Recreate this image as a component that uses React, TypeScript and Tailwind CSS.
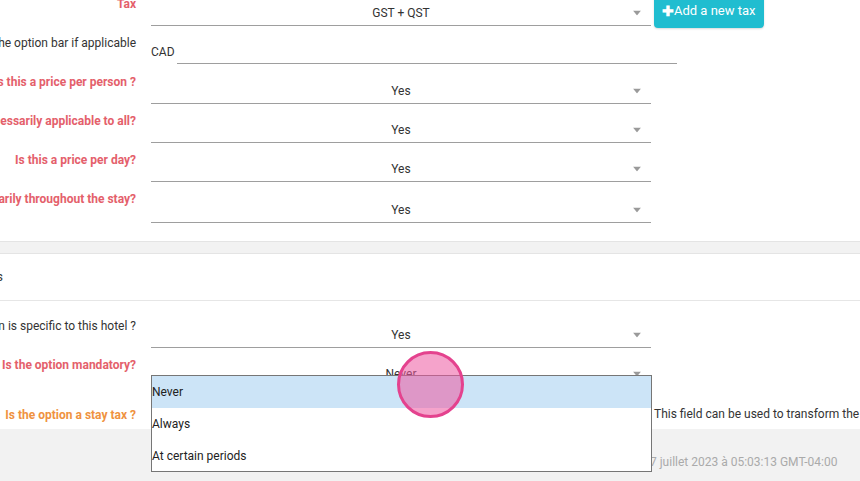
import type { ReactNode } from 'react'

const RED = 'text-[#e4606b]'
const ORANGE = 'text-[#ef9240]'

function Caret() {
  return (
    <svg width="8" height="5" viewBox="0 0 8 5" className="absolute right-[10px] top-1/2 -translate-y-1/2">
      <path d="M0 0 L8 0 L4 5 Z" fill="#9a9a9a" />
    </svg>
  )
}

function Select({ value, dark }: { value: string; dark?: boolean }) {
  return (
    <div className={`relative w-[500px] h-[26px] flex items-center justify-center border-b ${dark ? 'border-[#6b6b6b]' : 'border-[#9e9e9e]'} text-[12px] text-[#333]`}>
      {value}
      <Caret />
    </div>
  )
}

function Row({ label, tone, children, h = 'h-[39px]', mt = 'mt-[13px]', pt = 'pt-[9px]', extra }: { label: string; tone?: string; children: ReactNode; h?: string; mt?: string; pt?: string; extra?: ReactNode }) {
  return (
    <div className={`flex ${h}`}>
      <div className={`w-[136px] shrink-0 flex justify-end ${pt}`}>
        <span className={`whitespace-nowrap text-[12px] leading-4 ${tone ? `font-bold ${tone}` : 'text-[#333]'}`}>{label}</span>
      </div>
      <div className={`ml-[15px] ${mt}`}>{children}</div>
      {extra}
    </div>
  )
}

export default function App() {
  return (
    <div className="relative w-[860px] h-[481px] overflow-hidden bg-white" style={{ fontFamily: 'Roboto, "Noto Sans", sans-serif' }}>
      <div className="-mt-[13px]">
        <Row
          label="Tax"
          tone={RED}
          extra={
            <button className="ml-[3px] mt-[7px] h-[34px] px-[8px] rounded-b-[4px] bg-[#20bdd0] text-white text-[13px] flex items-center shadow-[0_1px_2px_rgba(0,0,0,0.15)]">
              <span className="font-bold text-[14px] leading-none">✚</span>Add a new tax
            </button>
          }
        >
          <Select value="GST + QST" />
        </Row>
        <Row label="Currency of the option bar if applicable">
          <div className="flex items-start text-[12px] text-[#333]">
            <span className="pt-[4px]">CAD</span>
            <div className="ml-[2px] w-[500px] h-[25px] border-b border-[#9e9e9e]" />
          </div>
        </Row>
        <Row label="Is this a price per person ?" tone={RED}>
          <Select value="Yes" />
        </Row>
        <Row label="Is this price necessarily applicable to all?" tone={RED}>
          <Select value="Yes" />
        </Row>
        <Row label="Is this a price per day?" tone={RED}>
          <Select value="Yes" />
        </Row>
        <Row label="Is this price necessarily throughout the stay?" tone={RED} h="h-[41px]" mt="mt-[15px]">
          <Select value="Yes" />
        </Row>
      </div>

      <div className="mt-[18px] h-[13px] bg-[#f2f2f2] border-y border-[#e4e4e4]" />

      <div className="h-[47px] flex items-center border-b border-[#e6e6e6] -ml-[66px] text-[13px] text-[#333]">
        Restrictions
      </div>

      <div className="pt-[8px]">
        <Row label="The option is specific to this hotel ?">
          <Select value="Yes" />
        </Row>
        <Row label="Is the option mandatory?" tone={RED}>
          <Select value="Never" dark />
        </Row>
        <Row
          label="Is the option a stay tax ?"
          tone={ORANGE}
          h="h-[42px]"
          pt="pt-[20px]"
          extra={<span className="ml-[3px] pt-[18px] whitespace-nowrap text-[12px] text-[#333]">This field can be used to transform the option into a stay tax</span>}
        >
          <div className="w-[500px]" />
        </Row>
      </div>

      <div className="h-[60px] bg-[#f2f2f2] pl-[650px] pt-[24px] text-[12px] text-[#aaaaaa] whitespace-nowrap">
        7 juillet 2023 à 05:03:13 GMT-04:00
      </div>

      {/* open dropdown list */}
      <div className="absolute left-[151px] top-[375px] w-[501px] h-[97px] border border-[#767676] bg-white text-[12px] text-[#222]">
        <div className="h-[32px] flex items-center bg-[#cce4f7]">Never</div>
        <div className="h-[32px] flex items-center">Always</div>
        <div className="h-[31px] flex items-center">At certain periods</div>
      </div>

      {/* click indicator */}
      <div className="absolute left-[397px] top-[351px] w-[67px] h-[67px] rounded-full border-[3px] border-[#e4428e] bg-[rgba(236,88,160,0.55)]" />
    </div>
  )
}
